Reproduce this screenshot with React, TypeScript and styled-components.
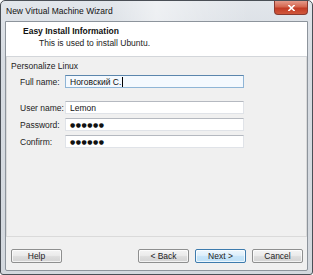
import React from "react";
import styled, { createGlobalStyle } from "styled-components";

const GlobalStyle = createGlobalStyle`
  html, body { margin: 0; padding: 0; background: #ffffff; }
  body { font-family: "Liberation Sans", Arial, sans-serif; font-size: 8.5px; color: #1e1e1e; }
  * { box-sizing: border-box; }
`;

const Window = styled.div`
  width: 313px;
  height: 275px;
  border: 1px solid #4a4f56;
  border-radius: 5px 5px 3px 3px;
  background: linear-gradient(180deg, #e2e6eb 0%, #d7dce2 20%, #d3d8de 100%);
  display: flex;
  flex-direction: column;
  overflow: hidden;
`;

const TitleBar = styled.div`
  height: 20px;
  display: flex;
  align-items: flex-start;
  justify-content: space-between;
  padding-left: 5px;
  background: linear-gradient(90deg, rgba(255,255,255,0) 0%, rgba(255,255,255,0) 35%, rgba(255,255,255,0.45) 50%, rgba(255,255,255,0.2) 65%, rgba(255,255,255,0) 80%);
`;

const Title = styled.span`
  margin-top: 5px;
  font-size: 8.5px;
  color: #111;
`;

const CloseButton = styled.div`
  width: 34px;
  height: 14px;
  margin-right: 4px;
  border: 1px solid #8a3a30;
  border-top: none;
  border-radius: 0 0 4px 4px;
  background: linear-gradient(180deg, #e59a8a 0%, #d4664f 45%, #c23b25 55%, #d0583c 100%);
  display: flex;
  align-items: center;
  justify-content: center;
`;

const CloseIcon = styled.svg`
  width: 7px;
  height: 6px;
`;

const Client = styled.div`
  flex: 1;
  margin: 0 4px 3px 4px;
  border: 1px solid #8d949c;
  border-radius: 0 0 2px 2px;
  background: #f0f0f0;
  display: flex;
  flex-direction: column;
`;

const Header = styled.div`
  height: 35px;
  background: #ffffff;
  border-bottom: 1px solid #d3d6da;
  padding: 4px 0 0 17px;
  display: flex;
  flex-direction: column;
  gap: 2px;
`;

const HeaderTitle = styled.div`
  font-weight: bold;
  font-size: 8.5px;
  line-height: 10px;
  color: #111;
`;

const HeaderSub = styled.div`
  padding-left: 16px;
  font-size: 8.5px;
  line-height: 10px;
  color: #222;
`;

const Panel = styled.div`
  flex: 1;
  border: 1px solid #dadada;
  border-top: none;
  padding: 4px 0 0 4px;
  display: flex;
  flex-direction: column;
`;

const GroupLabel = styled.div`
  font-size: 8.5px;
  line-height: 11px;
  color: #222;
`;

const Form = styled.div`
  margin-top: 3px;
  padding-left: 9px;
  display: grid;
  grid-template-columns: 45px 179px;
  row-gap: 4px;
  align-items: center;
`;

const Label = styled.div<{ $gapAfter?: boolean }>`
  font-size: 8.5px;
  color: #222;
  margin-bottom: ${(p) => (p.$gapAfter ? "9px" : "0")};
`;

const TextBox = styled.div<{ $focused?: boolean; $gapAfter?: boolean }>`
  height: 13px;
  border: 1px solid ${(p) => (p.$focused ? "#8fb5d6" : "#e0e3e8")};
  border-top-color: ${(p) => (p.$focused ? "#5b86ad" : "#b5b9c0")};
  background: ${(p) => (p.$focused ? "#f4f9fe" : "#ffffff")};
  padding-left: 4px;
  display: flex;
  align-items: center;
  font-size: 8.5px;
  color: #111;
  margin-bottom: ${(p) => (p.$gapAfter ? "9px" : "0")};
`;

const Caret = styled.span`
  display: inline-block;
  width: 1px;
  height: 10px;
  background: #000;
  margin-left: 1px;
`;

const Dots = styled.span`
  font-family: "DejaVu Sans", sans-serif;
  font-size: 6px;
  letter-spacing: 0.5px;
  color: #111;
`;

const ButtonBar = styled.div`
  height: 33px;
  display: flex;
  align-items: flex-start;
  padding: 12px 4px 0 5px;
  gap: 6px;
`;

const Spacer = styled.div`
  flex: 1;
`;

const Button = styled.div<{ $default?: boolean }>`
  width: 51px;
  height: 14px;
  border: 1px solid ${(p) => (p.$default ? "#3d7bad" : "#8e8f8f")};
  border-radius: 2px;
  background: ${(p) =>
    p.$default
      ? "linear-gradient(180deg, #eef7fd 0%, #ddeffb 45%, #c6e4f8 55%, #bfe1f7 100%)"
      : "linear-gradient(180deg, #f4f4f4 0%, #ebebeb 45%, #dddddd 55%, #d3d3d3 100%)"};
  box-shadow: inset 0 0 0 1px rgba(255,255,255,0.7);
  display: flex;
  align-items: center;
  justify-content: center;
  font-size: 8.5px;
  color: #222;
`;

export default function App() {
  return (
    <>
      <GlobalStyle />
      <Window>
        <TitleBar>
          <Title>New Virtual Machine Wizard</Title>
          <CloseButton>
            <CloseIcon viewBox="0 0 7 6">
              <path d="M1 0.5 L6 5.5 M6 0.5 L1 5.5" stroke="#ffffff" strokeWidth="1.6" strokeLinecap="square" />
            </CloseIcon>
          </CloseButton>
        </TitleBar>
        <Client>
          <Header>
            <HeaderTitle>Easy Install Information</HeaderTitle>
            <HeaderSub>This is used to install Ubuntu.</HeaderSub>
          </Header>
          <Panel>
            <GroupLabel>Personalize Linux</GroupLabel>
            <Form>
              <Label $gapAfter>Full name:</Label>
              <TextBox $focused $gapAfter>
                Ноговский С.<Caret />
              </TextBox>
              <Label>User name:</Label>
              <TextBox>Lemon</TextBox>
              <Label>Password:</Label>
              <TextBox>
                <Dots>●●●●●●</Dots>
              </TextBox>
              <Label>Confirm:</Label>
              <TextBox>
                <Dots>●●●●●●</Dots>
              </TextBox>
            </Form>
          </Panel>
          <ButtonBar>
            <Button>Help</Button>
            <Spacer />
            <Button>&lt; Back</Button>
            <Button $default>Next &gt;</Button>
            <Button>Cancel</Button>
          </ButtonBar>
        </Client>
      </Window>
    </>
  );
}
